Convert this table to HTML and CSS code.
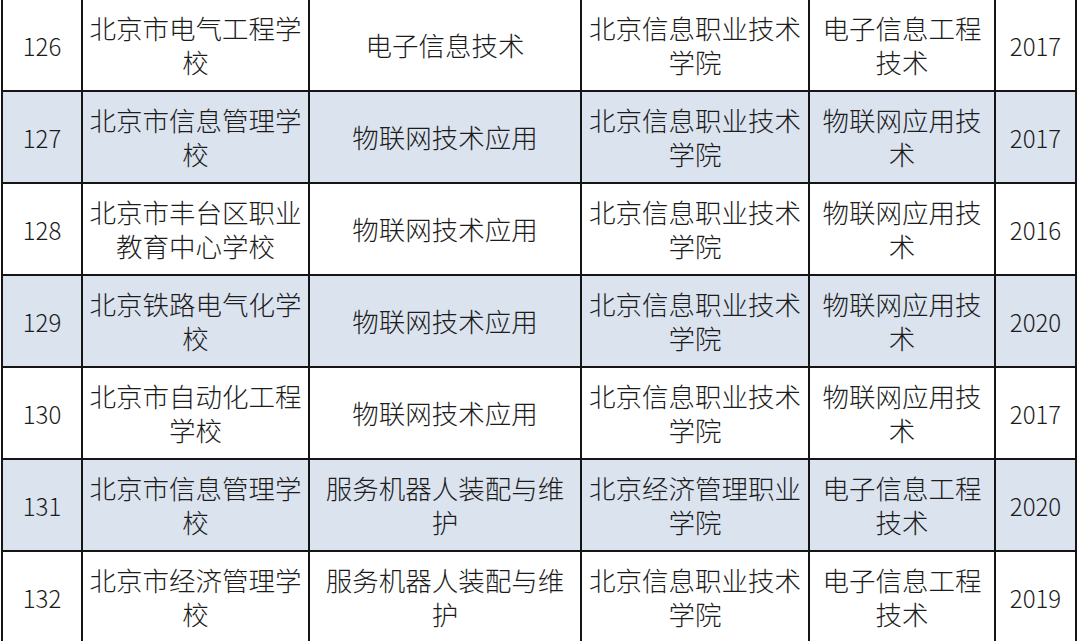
FILE: index.html
```html
<!DOCTYPE html>
<html lang="zh-CN">
<head>
<meta charset="utf-8">
<title>表</title>
<link rel="stylesheet" href="styles.css">
</head>
<body>
<div class="table">
  <div class="row">
    <div class="cell num">126</div>
    <div class="cell">北京市电气工程学<br>校</div>
    <div class="cell">电子信息技术</div>
    <div class="cell">北京信息职业技术<br>学院</div>
    <div class="cell">电子信息工程<br>技术</div>
    <div class="cell num">2017</div>
  </div>
  <div class="row alt">
    <div class="cell num">127</div>
    <div class="cell">北京市信息管理学<br>校</div>
    <div class="cell">物联网技术应用</div>
    <div class="cell">北京信息职业技术<br>学院</div>
    <div class="cell">物联网应用技<br>术</div>
    <div class="cell num">2017</div>
  </div>
  <div class="row">
    <div class="cell num">128</div>
    <div class="cell">北京市丰台区职业<br>教育中心学校</div>
    <div class="cell">物联网技术应用</div>
    <div class="cell">北京信息职业技术<br>学院</div>
    <div class="cell">物联网应用技<br>术</div>
    <div class="cell num">2016</div>
  </div>
  <div class="row alt">
    <div class="cell num">129</div>
    <div class="cell">北京铁路电气化学<br>校</div>
    <div class="cell">物联网技术应用</div>
    <div class="cell">北京信息职业技术<br>学院</div>
    <div class="cell">物联网应用技<br>术</div>
    <div class="cell num">2020</div>
  </div>
  <div class="row">
    <div class="cell num">130</div>
    <div class="cell">北京市自动化工程<br>学校</div>
    <div class="cell">物联网技术应用</div>
    <div class="cell">北京信息职业技术<br>学院</div>
    <div class="cell">物联网应用技<br>术</div>
    <div class="cell num">2017</div>
  </div>
  <div class="row alt">
    <div class="cell num">131</div>
    <div class="cell">北京市信息管理学<br>校</div>
    <div class="cell">服务机器人装配与维<br>护</div>
    <div class="cell">北京经济管理职业<br>学院</div>
    <div class="cell">电子信息工程<br>技术</div>
    <div class="cell num">2020</div>
  </div>
  <div class="row">
    <div class="cell num">132</div>
    <div class="cell">北京市经济管理学<br>校</div>
    <div class="cell">服务机器人装配与维<br>护</div>
    <div class="cell">北京信息职业技术<br>学院</div>
    <div class="cell">电子信息工程<br>技术</div>
    <div class="cell num">2019</div>
  </div>
</div>
</body>
</html>
```

FILE: styles.css
```css
html, body {
  margin: 0;
  padding: 0;
  background: #ffffff;
  overflow: hidden;
}

.table {
  margin-left: 1px;
  width: max-content;
  border-left: 2px solid #151515;
  font-family: "Noto Sans CJK SC", "Noto Sans", sans-serif;
  color: #1c1c1c;
}

.row {
  display: grid;
  grid-template-columns: 80px 227px 272px 228px 186px 81px;
  height: 92px;
}

.row.alt {
  background: #dbe3ef;
}

.cell {
  display: flex;
  align-items: center;
  justify-content: center;
  text-align: center;
  border-right: 2px solid #151515;
  border-bottom: 2px solid #151515;
  font-size: 26.5px;
  font-weight: 300;
  line-height: 34px;
  padding: 0 4px;
  box-sizing: border-box;
  white-space: nowrap;
}

.cell.num {
  font-size: 24px;
  padding-top: 1px;
}
```
